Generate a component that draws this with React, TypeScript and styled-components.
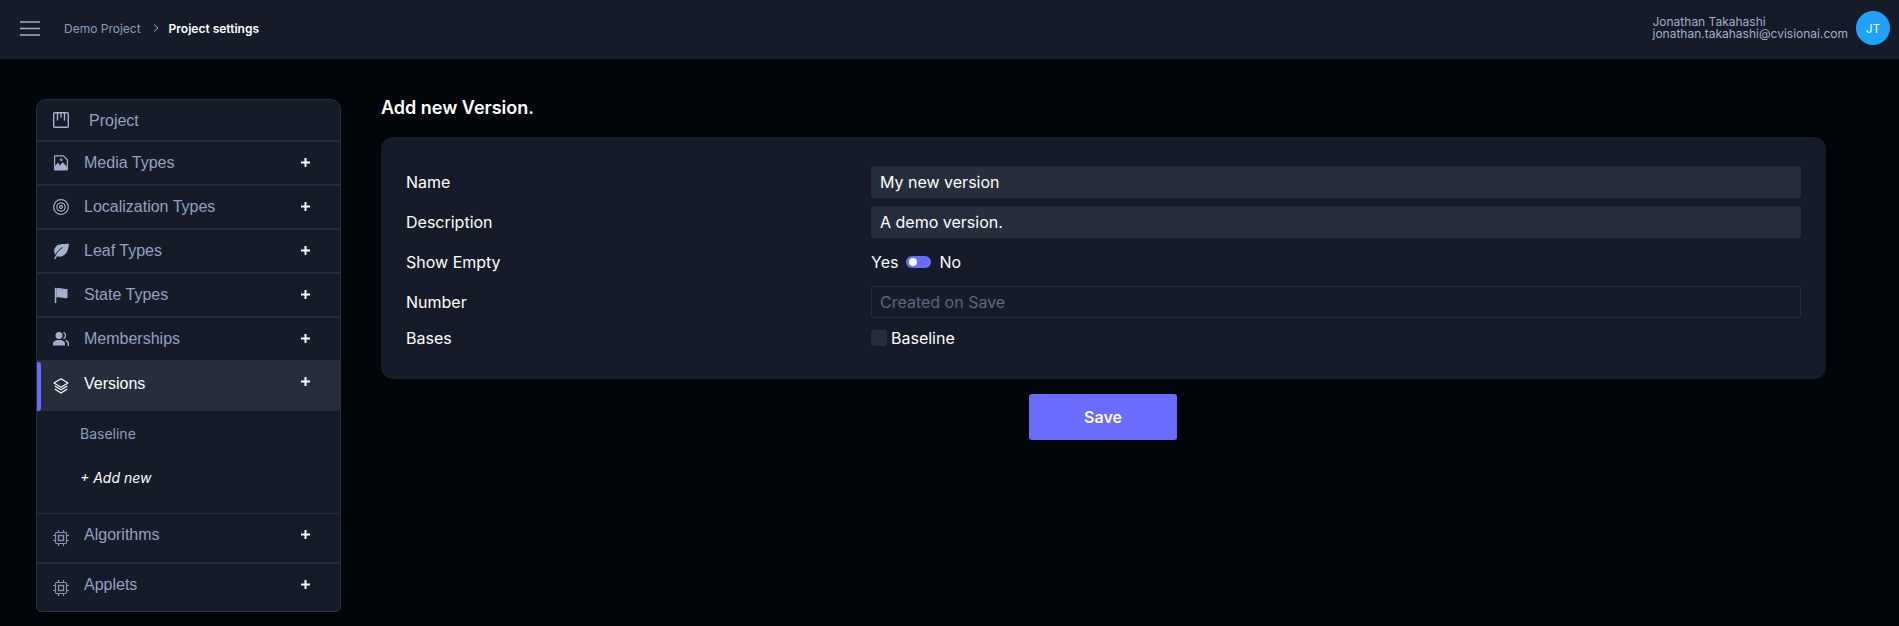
import React from "react";
import styled, { createGlobalStyle } from "styled-components";

const Global = createGlobalStyle`
  html, body { margin: 0; padding: 0; background: #00050a; }
  body { font-family: Inter, "Noto Sans", sans-serif; color: #fff; overflow: hidden; }
  * { box-sizing: border-box; }
`;

const Page = styled.div`
  width: 1899px;
  height: 626px;
  overflow: hidden;
  background: #00050a;
`;
const Header = styled.header`
  height: 59px;
  background: #151b28;
  display: flex;
  align-items: center;
  padding: 0 9px 3px 20px;
`;
const Burger = styled.svg`
  width: 20px;
  height: 15px;
  margin-right: 24px;
  color: #a2afcd;
`;
const Crumbs = styled.div`
  display: flex;
  align-items: center;
  font-size: 12px;
  color: #8d9bbd;
`;
const Chevron = styled.svg`
  width: 8px;
  height: 8px;
  margin: 0 9px 0 11px;
  color: #a2afcd;
`;
const CrumbCurrent = styled.span`
  font-weight: 600;
  color: #fff;
`;
const Spacer = styled.div`
  flex: 1;
`;
const User = styled.div`
  font-size: 12px;
  line-height: 12px;
  color: #a2afcd;
  margin-right: 8px;
`;
const Avatar = styled.div`
  width: 34px;
  height: 34px;
  border-radius: 50%;
  background: #1ea1ff;
  display: flex;
  align-items: center;
  justify-content: center;
  font-size: 12px;
  color: #fff;
`;
const Main = styled.main`
  display: flex;
  align-items: flex-start;
  padding: 40px 73px 0 36px;
  gap: 40px;
`;
const Sidebar = styled.nav`
  width: 305px;
  flex: none;
  background: #151b28;
  border: 1px solid #262e3d;
  border-radius: 10px 10px 5px 5px;
  overflow: hidden;
`;
const Row = styled.div<{ $h: number; $active?: boolean; $thin?: boolean }>`
  height: ${(p) => p.$h}px;
  display: flex;
  align-items: center;
  padding: 0 0 0 16px;
  position: relative;
  border-top: ${(p) => (p.$active ? "none" : p.$thin ? "1px solid #262e3d" : "2px solid #262e3d")};
  background: ${(p) => (p.$active ? "#262e3d" : "transparent")};
  color: ${(p) => (p.$active ? "#fff" : "#93a1c2")};
  font-family: "Liberation Sans", Arial, sans-serif;
  font-size: 16px;
  &:first-child { border-top: none; }
`;
const Accent = styled.span`
  position: absolute;
  left: 0;
  top: 2px;
  bottom: 0;
  width: 4px;
  background: #696cff;
  border-radius: 0 3px 3px 0;
`;
const IconWrap = styled.span`
  width: 16px;
  height: 16px;
  flex: none;
  margin-right: 15px;
  display: block;
  svg { display: block; width: 16px; height: 16px; }
`;
const Label = styled.span<{ $gap?: number; $lift?: number }>`
  flex: 1;
  margin-left: ${(p) => p.$gap ?? 0}px;
  transform: translateY(${(p) => -(p.$lift ?? 0)}px);
`;
const Plus = styled.svg<{ $lift?: number }>`
  width: 9px;
  height: 9px;
  margin-right: 30px;
  color: #fff;
  transform: translateY(${(p) => -(p.$lift ?? 1)}px);
`;
const SubList = styled.div`
  height: 102px;
`;
const SubItem = styled.div<{ $add?: boolean }>`
  height: 44px;
  padding-left: 43px;
  display: flex;
  align-items: center;
  font-size: 14px;
  font-style: ${(p) => (p.$add ? "italic" : "normal")};
  font-weight: 400;
  color: ${(p) => (p.$add ? "#fff" : "#8d9bbd")};
`;
const Content = styled.section`
  flex: 1;
  min-width: 0;
`;
const Title = styled.h1`
  margin: 0;
  padding-top: 1px;
  font-size: 18px;
  font-weight: 600;
  line-height: 16px;
  color: #fff;
  height: 38px;
`;
const Card = styled.div`
  background: #151b28;
  border-radius: 12px;
  padding: 29px 25px 0 25px;
  height: 242px;
`;
const FormRow = styled.div<{ $h: number; $mb: number }>`
  display: grid;
  grid-template-columns: 465px 1fr;
  align-items: center;
  height: ${(p) => p.$h}px;
  margin-bottom: ${(p) => p.$mb}px;
  font-size: 16px;
`;
const Field = styled.div<{ $ghost?: boolean }>`
  height: 32px;
  display: flex;
  align-items: center;
  padding: 0 ${(p) => (p.$ghost ? 8 : 9)}px;
  border-radius: 2px;
  background: ${(p) => (p.$ghost ? "transparent" : "#262e3d")};
  border: ${(p) => (p.$ghost ? "1px solid #262e3d" : "none")};
  color: ${(p) => (p.$ghost ? "#5b6780" : "#fff")};
`;
const Inline = styled.div`
  display: flex;
  align-items: center;
`;
const Toggle = styled.span`
  width: 25px;
  height: 12px;
  margin: 0 8px;
  border-radius: 6px;
  background: #696cff;
  padding: 2px 3px;
  display: block;
`;
const Knob = styled.span`
  width: 8px;
  height: 8px;
  border-radius: 50%;
  background: #fff;
  display: block;
`;
const Check = styled.span`
  width: 16px;
  height: 16px;
  border-radius: 2px;
  background: #262e3d;
  margin-right: 4px;
`;
const Actions = styled.div`
  display: flex;
  justify-content: center;
  padding: 15px 1px 0 0;
`;
const SaveButton = styled.button`
  width: 148px;
  height: 46px;
  border: 0;
  border-radius: 3px;
  background: #696cff;
  color: #fff;
  font: 600 16px Inter, sans-serif;
`;

const ICON = "#a2afcd";

const Kanban = () => (
  <svg viewBox="0 0 16 16" fill="none" stroke={ICON} strokeWidth={1.4}>
    <rect x="0.7" y="0.7" width="14.6" height="14.6" rx="1" />
    <path d="M4.500 1v7.500M8 1v4.500M11.500 1v7.500" />
  </svg>
);
const MediaIcon = () => (
  <svg viewBox="0 0 16 16" fill="none" stroke={ICON}>
    <path strokeWidth={1.2} d="M2 .9h8.500L14.400 4.800V14a1 1 0 0 1-1 1H2.600a1 1 0 0 1-1-1V1.500z" />
    <path stroke="none" fill={ICON} d="M1.600 15v-3.500L5 7.500l2 3 1-1.300L9.500 7l4.900 5v3z" />
    <circle stroke="none" fill={ICON} cx="8.200" cy="4.800" r="1.300" />
  </svg>
);
const TargetIcon = () => (
  <svg viewBox="0 0 16 16" fill="none" stroke={ICON} strokeWidth={1.3}>
    <circle cx="8" cy="8" r="7.300" fill="#05080e" />
    <circle cx="8" cy="8" r="4.200" />
    <circle cx="8" cy="8" r="1.500" />
  </svg>
);
const LeafIcon = () => (
  <svg viewBox="0 0 16 16">
    <path fill={ICON} d="M16 .7C11 1 6 .4 3 3.500.6 6 .7 9.500 2.500 12.500L1.300 16h1.500l1-2.800C7.500 14.500 11 13 13.300 10 15 7.500 15.700 4 16 .7z" />
    <path fill="none" stroke="#151b28" strokeWidth={1} d="M2.300 12.800C3.500 9.500 6 6.500 9.500 4.500" />
  </svg>
);
const FlagIcon = () => (
  <svg viewBox="0 0 16 16" fill={ICON}>
    <path d="M1.800.8h1.500V16H1.800z" />
    <path d="M3.300 1.500c4-1.500 7 1.300 11.200.2v9.300c-4.200 1.100-7.200-1.700-11.200-.2z" />
  </svg>
);
const PeopleIcon = () => (
  <svg viewBox="0 0 16 16" fill={ICON}>
    <circle cx="6" cy="4.500" r="3.500" />
    <path d="M0 14.500V12.500C0 10.300 2.800 9 6 9s6 1.300 6 3.500v2z" />
    <path fill="none" stroke={ICON} strokeWidth={1.3} d="M10.500 1.300a3.500 3.500 0 0 1 0 6.400" />
    <path fill="none" stroke={ICON} strokeWidth={1.500} d="M12.600 9.500c1.800.5 2.700 1.700 2.700 3.200V15" />
  </svg>
);
const LayersIcon = () => (
  <svg viewBox="0 0 16 16" fill="none" stroke="#fff" strokeWidth={1.2} strokeLinejoin="round">
    <path d="M8 .8 15 5l-7 4.200L1 5z" />
    <path d="M1.800 8 8 11.800 14.200 8M1.800 11 8 15l6.200-4" />
  </svg>
);
const ChipIcon = () => (
  <svg viewBox="0 0 16 16" fill="none" stroke="#8592b0" strokeWidth={1.2}>
    <rect x="2.500" y="2.500" width="11" height="11" rx="1.200" />
    <rect x="5.500" y="5.500" width="5" height="5" strokeWidth={1.4} />
    <path d="M5.500 0v2.500M10.500 0v2.500M5.500 13.500V16M10.500 13.500V16M0 5.500h2.500M0 10.500h2.500M13.500 5.500H16M13.500 10.500H16" />
  </svg>
);
const PlusMark = ({ lift }: { lift?: number }) => (
  <Plus $lift={lift} viewBox="0 0 9 9" fill="none" stroke="currentColor" strokeWidth={2}>
    <path d="M4.500 0v9M0 4.500h9" />
  </Plus>
);

export default function App() {
  return (
    <Page>
      <Global />
      <Header>
        <Burger viewBox="0 0 20 15" fill="none" stroke="currentColor" strokeWidth={1.6}>
          <path d="M0 1h20M0 7.500h20M0 14h20" />
        </Burger>
        <Crumbs>
          <span>Demo Project</span>
          <Chevron viewBox="0 0 8 8" fill="none" stroke="currentColor" strokeWidth={1}>
            <path d="M2 0.500 6 4 2 7.500" />
          </Chevron>
          <CrumbCurrent>Project settings</CrumbCurrent>
        </Crumbs>
        <Spacer />
        <User>
          <div>Jonathan Takahashi</div>
          <div>jonathan.takahashi@cvisionai.com</div>
        </User>
        <Avatar>JT</Avatar>
      </Header>
      <Main>
        <Sidebar>
          <Row $h={40}>
            <IconWrap><Kanban /></IconWrap>
            <Label $gap={5} $lift={-1}>Project</Label>
          </Row>
          <Row $h={44}><IconWrap><MediaIcon /></IconWrap><Label>Media Types</Label><PlusMark /></Row>
          <Row $h={44}><IconWrap><TargetIcon /></IconWrap><Label>Localization Types</Label><PlusMark /></Row>
          <Row $h={44}><IconWrap><LeafIcon /></IconWrap><Label>Leaf Types</Label><PlusMark /></Row>
          <Row $h={44}><IconWrap><FlagIcon /></IconWrap><Label>State Types</Label><PlusMark /></Row>
          <Row $h={44}><IconWrap><PeopleIcon /></IconWrap><Label>Memberships</Label><PlusMark /></Row>
          <Row $h={51} $active>
            <Accent />
            <IconWrap><LayersIcon /></IconWrap>
            <Label $lift={2}>Versions</Label>
            <PlusMark lift={4} />
          </Row>
          <SubList>
            <SubItem>Baseline</SubItem>
            <SubItem $add>+ Add new</SubItem>
          </SubList>
          <Row $h={49} $thin><IconWrap><ChipIcon /></IconWrap><Label $lift={3}>Algorithms</Label><PlusMark lift={4} /></Row>
          <Row $h={49}><IconWrap><ChipIcon /></IconWrap><Label $lift={3}>Applets</Label><PlusMark lift={3} /></Row>
        </Sidebar>
        <Content>
          <Title>Add new Version.</Title>
          <Card>
            <FormRow $h={32} $mb={8}><span>Name</span><Field>My new version</Field></FormRow>
            <FormRow $h={32} $mb={8}><span>Description</span><Field>A demo version.</Field></FormRow>
            <FormRow $h={32} $mb={8}>
              <span>Show Empty</span>
              <Inline>Yes<Toggle><Knob /></Toggle>No</Inline>
            </FormRow>
            <FormRow $h={32} $mb={4}><span>Number</span><Field $ghost>Created on Save</Field></FormRow>
            <FormRow $h={32} $mb={0}>
              <span>Bases</span>
              <Inline><Check />Baseline</Inline>
            </FormRow>
          </Card>
          <Actions><SaveButton>Save</SaveButton></Actions>
        </Content>
      </Main>
    </Page>
  );
}
